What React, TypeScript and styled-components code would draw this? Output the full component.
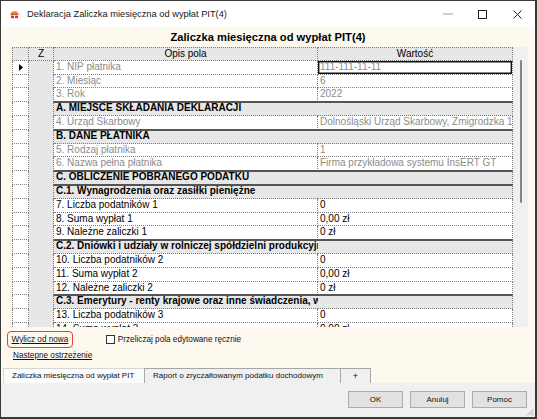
import React from 'react';
import styled, { createGlobalStyle, css } from 'styled-components';

const GlobalStyle = createGlobalStyle`
  html, body {
    margin: 0;
    padding: 0;
    width: 537px;
    height: 419px;
    overflow: hidden;
    background: #ffffff;
  }
  * { box-sizing: border-box; }
`;

const Frame = styled.div`
  width: 537px;
  height: 419px;
  display: flex;
  flex-direction: column;
  border: 1px solid #3a3a3a;
  border-right-width: 2px;
  border-bottom-width: 2px;
  font-family: "Liberation Sans", Arial, sans-serif;
  background: #fdf9ee;
  overflow: hidden;
`;

const TitleBar = styled.div`
  height: 26px;
  flex: none;
  display: flex;
  align-items: center;
  background: #ffffff;
  padding-left: 9px;
`;

const AppIcon = styled.svg`
  width: 9px;
  height: 9px;
  margin-right: 8px;
  flex: none;
`;

const TitleText = styled.div`
  font-size: 9.3px;
  color: #1a1a1a;
  white-space: nowrap;
`;

const Controls = styled.div`
  margin-left: auto;
  display: flex;
  height: 100%;
`;

const ControlButton = styled.div`
  width: 35px;
  height: 100%;
  display: flex;
  align-items: center;
  justify-content: center;
`;

const Client = styled.div`
  flex: 1;
  display: flex;
  flex-direction: column;
  min-height: 0;
`;

const Heading = styled.div`
  height: 20px;
  line-height: 20px;
  text-align: center;
  font-size: 11.2px;
  font-weight: bold;
  color: #000;
`;

const GridFrame = styled.div`
  height: 280px;
  margin: 0 7px 0 11px;
  display: flex;
  overflow: hidden;
  flex: none;
`;

const Table = styled.div`
  width: 501px;
  display: flex;
  flex-direction: column;
  background: #fff;
`;

const Row = styled.div`
  display: grid;
  grid-template-columns: 17px 25px 264px 195px;
  height: 13.8px;
  flex: none;
`;

const dotted = '1px dotted #7e7e7e';

const cellText = css`
  font-size: 10px;
  line-height: 12.6px;
  white-space: nowrap;
  overflow: hidden;
  padding: 0 2px;
`;

const IndicatorCell = styled.div<{ $head?: boolean }>`
  border-left: ${dotted};
  border-right: ${dotted};
  border-bottom: ${dotted};
  border-top: ${p => (p.$head ? dotted : 'none')};
  background: ${p => (p.$head ? '#e7e7e7' : '#fff')};
  display: flex;
  align-items: center;
  justify-content: center;
`;

const ZCell = styled.div<{ $head?: boolean }>`
  ${cellText};
  background: #e7e7e7;
  border-right: ${dotted};
  border-bottom: ${p => (p.$head ? dotted : 'none')};
  border-top: ${p => (p.$head ? dotted : 'none')};
  text-align: center;
  color: #000;
`;

const HeaderCell = styled.div`
  ${cellText};
  background: #e7e7e7;
  border-top: ${dotted};
  border-right: ${dotted};
  border-bottom: ${dotted};
  text-align: center;
  color: #000;
`;

const LabelCell = styled.div<{ $disabled?: boolean }>`
  ${cellText};
  border-right: ${dotted};
  border-bottom: ${dotted};
  color: ${p => (p.$disabled ? '#8c8c8c' : '#000')};
`;

const ValueCell = styled(LabelCell)<{ $focused?: boolean }>`
  ${p => p.$focused && css`box-shadow: inset 0 0 0 1.4px #111;`}
`;

const SectionCell = styled.div<{ $last?: boolean }>`
  ${cellText};
  background: #e7e7e7;
  font-weight: bold;
  color: #000;
  border-bottom: ${dotted};
  border-right: ${p => (p.$last ? dotted : 'none')};
  box-shadow: 0 -1px 0 #555, inset 0 1px 0 #555;
`;

const ScrollTrack = styled.div`
  width: 15px;
  flex: none;
  background: #f0f0f0;
  padding-top: 13px;
  display: flex;
  justify-content: center;
`;

const ScrollThumb = styled.div`
  width: 2px;
  height: 143px;
  border-radius: 1px;
  background: #858585;
`;

const Options = styled.div`
  padding: 4px 0 0 6px;
  display: flex;
  flex-direction: column;
  flex: none;
`;

const OptionRow = styled.div`
  height: 17px;
  display: flex;
  align-items: center;
`;

const Highlight = styled.span`
  height: 17px;
  display: inline-flex;
  align-items: center;
  padding: 0 3.5px;
  border: 1.5px solid #e4403a;
  border-radius: 4px;
`;

const Link = styled.a`
  font-size: 8.2px;
  line-height: 12px;
  color: #111;
  text-decoration: underline;
  white-space: nowrap;
  cursor: pointer;
`;

const WarningLink = styled(Link)`
  margin: 2px 0 0 6px;
`;

const CheckLabel = styled.label`
  margin-left: 33px;
  display: flex;
  align-items: center;
  gap: 3px;
  font-size: 8.2px;
  color: #111;
  white-space: nowrap;
`;

const CheckBox = styled.span`
  width: 9px;
  height: 9px;
  border: 1px solid #333;
  background: #fff;
`;

const TabStrip = styled.div`
  margin-top: 6px;
  padding-left: 2px;
  height: 15px;
  display: flex;
  flex: none;
`;

const Tab = styled.div<{ $w: number; $active?: boolean }>`
  width: ${p => p.$w}px;
  height: 15px;
  line-height: 14px;
  font-size: 8px;
  color: #111;
  white-space: nowrap;
  overflow: hidden;
  padding-left: 8px;
  ${p =>
    p.$active
      ? css`
          background: #fbfbfb;
          border-top: 1px solid #d6d6d6;
          border-left: 1px solid #d6d6d6;
        `
      : css`
          background: #f0f0f0;
          border-top: 1px solid #a6a6a6;
          border-left: 1px solid #a6a6a6;
          &:last-child {
            border-right: 1px solid #a6a6a6;
          }
        `}
`;

const AddTab = styled(Tab)`
  padding-left: 0;
  text-align: center;
  font-size: 9px;
`;

const Footer = styled.div`
  height: 34px;
  flex: none;
  background: #f0f0f0;
  display: flex;
  justify-content: flex-end;
  align-items: flex-start;
  gap: 7px;
  padding: 8px 8px 0 0;
  position: relative;
`;

const Button = styled.button`
  width: 55px;
  height: 17px;
  padding: 0;
  font-family: "Liberation Sans", Arial, sans-serif;
  font-size: 8px;
  color: #111;
  background: #e1e1e1;
  border: 1px solid #adadad;
  border-radius: 0;
`;

const Grip = styled.svg`
  position: absolute;
  right: 1px;
  bottom: 1px;
  width: 8px;
  height: 8px;
`;

type Item =
  | { kind: 'field'; label: string; value: string; disabled?: boolean; focused?: boolean; current?: boolean }
  | { kind: 'section'; label: string };

const items: Item[] = [
  { kind: 'field', label: '1. NIP płatnika', value: '111-111-11-11', disabled: true, focused: true, current: true },
  { kind: 'field', label: '2. Miesiąc', value: '6', disabled: true },
  { kind: 'field', label: '3. Rok', value: '2022', disabled: true },
  { kind: 'section', label: 'A. MIEJSCE SKŁADANIA DEKLARACJI' },
  { kind: 'field', label: '4. Urząd Skarbowy', value: 'Dolnośląski Urząd Skarbowy, Żmigrodzka 1', disabled: true },
  { kind: 'section', label: 'B. DANE PŁATNIKA' },
  { kind: 'field', label: '5. Rodzaj płatnika', value: '1', disabled: true },
  { kind: 'field', label: '6. Nazwa pełna płatnika', value: 'Firma przykładowa systemu InsERT GT', disabled: true },
  { kind: 'section', label: 'C. OBLICZENIE POBRANEGO PODATKU' },
  { kind: 'section', label: 'C.1. Wynagrodzenia oraz zasiłki pieniężne' },
  { kind: 'field', label: '7. Liczba podatników 1', value: '0' },
  { kind: 'field', label: '8. Suma wypłat 1', value: '0,00 zł' },
  { kind: 'field', label: '9. Należne zaliczki 1', value: '0 zł' },
  { kind: 'section', label: 'C.2. Dniówki i udziały w rolniczej spółdzielni produkcyjnej' },
  { kind: 'field', label: '10. Liczba podatników 2', value: '0' },
  { kind: 'field', label: '11. Suma wypłat 2', value: '0,00 zł' },
  { kind: 'field', label: '12. Należne zaliczki 2', value: '0 zł' },
  { kind: 'section', label: 'C.3. Emerytury - renty krajowe oraz inne świadczenia, w tym renty strukturalne' },
  { kind: 'field', label: '13. Liczba podatników 3', value: '0' },
  { kind: 'field', label: '14. Suma wypłat 3', value: '0,00 zł' },
  { kind: 'field', label: '15. Należne zaliczki 3', value: '0 zł' },
];

function RowPointer() {
  return (
    <svg width="4" height="7" viewBox="0 0 4 7">
      <polygon points="0,0 4,3.5 0,7" fill="#000" />
    </svg>
  );
}

function App() {
  return (
    <>
      <GlobalStyle />
      <Frame>
        <TitleBar>
          <AppIcon viewBox="0 0 9 9">
            <defs>
              <linearGradient id="ic" x1="0" y1="0" x2="0" y2="1">
                <stop offset="0" stopColor="#f2b27a" />
                <stop offset="1" stopColor="#c8501e" />
              </linearGradient>
            </defs>
            <path d="M0.5 5 A4 4 0 0 1 8.5 5 Z" fill="url(#ic)" />
            <rect x="1" y="5.6" width="3" height="2.6" fill="#d6342a" />
            <rect x="5" y="5.6" width="3" height="2.6" fill="#d6342a" />
          </AppIcon>
          <TitleText>Deklaracja Zaliczka miesięczna od wypłat PIT(4)</TitleText>
          <Controls>
            <ControlButton>
              <svg width="10" height="2" viewBox="0 0 10 2">
                <line x1="0" y1="1" x2="10" y2="1" stroke="#a3a3a3" strokeWidth="1" />
              </svg>
            </ControlButton>
            <ControlButton>
              <svg width="9" height="9" viewBox="0 0 9 9">
                <rect x="0.5" y="0.5" width="8" height="8" fill="none" stroke="#222" strokeWidth="1" />
              </svg>
            </ControlButton>
            <ControlButton>
              <svg width="9" height="9" viewBox="0 0 9 9">
                <path d="M0.5 0.5 L8.5 8.5 M8.5 0.5 L0.5 8.5" stroke="#222" strokeWidth="1" />
              </svg>
            </ControlButton>
          </Controls>
        </TitleBar>

        <Client>
          <Heading>Zaliczka miesięczna od wypłat PIT(4)</Heading>

          <GridFrame>
            <Table>
              <Row>
                <IndicatorCell $head />
                <ZCell $head>Z</ZCell>
                <HeaderCell>Opis pola</HeaderCell>
                <HeaderCell>Wartość</HeaderCell>
              </Row>
              {items.map((it, i) =>
                it.kind === 'section' ? (
                  <Row key={i}>
                    <IndicatorCell />
                    <ZCell />
                    <SectionCell>{it.label}</SectionCell>
                    <SectionCell $last />
                  </Row>
                ) : (
                  <Row key={i}>
                    <IndicatorCell>{it.current && <RowPointer />}</IndicatorCell>
                    <ZCell />
                    <LabelCell $disabled={it.disabled}>{it.label}</LabelCell>
                    <ValueCell $disabled={it.disabled} $focused={it.focused}>
                      {it.value}
                    </ValueCell>
                  </Row>
                )
              )}
            </Table>
            <ScrollTrack>
              <ScrollThumb />
            </ScrollTrack>
          </GridFrame>

          <Options>
            <OptionRow>
              <Highlight>
                <Link>Wylicz od nowa</Link>
              </Highlight>
              <CheckLabel>
                <CheckBox />
                Przeliczaj pola edytowane ręcznie
              </CheckLabel>
            </OptionRow>
            <WarningLink>Nastepne ostrzeżenie</WarningLink>
          </Options>

          <TabStrip>
            <Tab $w={141} $active>Zaliczka miesięczna od wypłat PIT</Tab>
            <Tab $w={196}>Raport o zryczałtowanym podatku dochodowym</Tab>
            <AddTab $w={31}>+</AddTab>
          </TabStrip>
        </Client>

        <Footer>
          <Button>OK</Button>
          <Button>Anuluj</Button>
          <Button>Pomoc</Button>
          <Grip viewBox="0 0 8 8">
            <path d="M7.5 1 L1 7.5 M7.5 4 L4 7.5 M7.5 6.5 L6.5 7.5" stroke="#9a9a9a" strokeWidth="0.8" />
          </Grip>
        </Footer>
      </Frame>
    </>
  );
}

export default App;
